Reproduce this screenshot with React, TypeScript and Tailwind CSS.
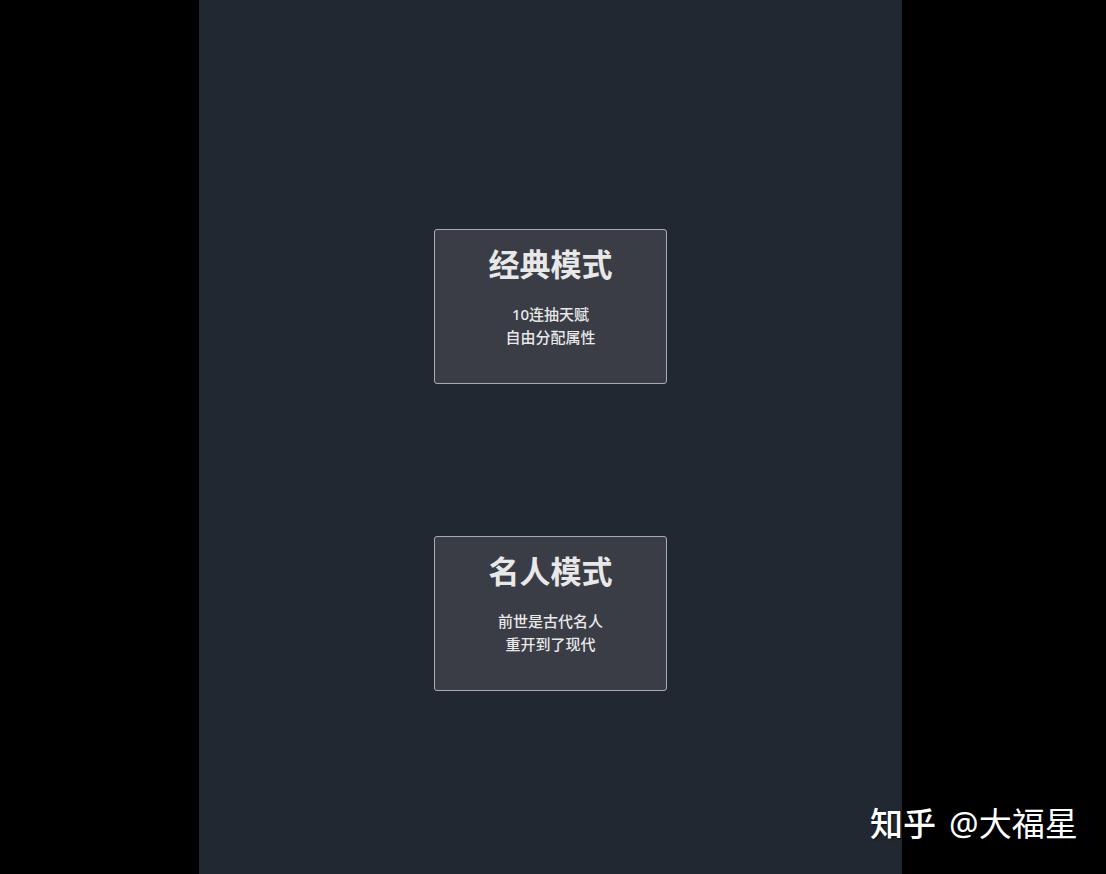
import React from "react";

const font = { fontFamily: '"Noto Sans", "Noto Sans CJK SC", sans-serif' };

function Card({ title, lines }: { title: string; lines: string[] }) {
  return (
    <div className="w-[233px] h-[155px] bg-[#3a3d46] border border-[#a9abb0] rounded-[3px] flex flex-col items-center pt-[13px]">
      <div className="text-[31px] leading-[42px] font-bold text-[#e8e8e8]">{title}</div>
      <div className="mt-[18px] text-[15px] leading-[23px] font-medium text-[#e8e8e8] text-center">
        {lines.map((l) => (
          <div key={l}>{l}</div>
        ))}
      </div>
    </div>
  );
}

export default function App() {
  return (
    <div className="w-[1106px] h-[874px] bg-black relative overflow-hidden" style={font}>
      <div className="ml-[199px] w-[703px] h-full bg-[#222831] flex flex-col items-center pt-[229px] gap-[152px]">
        <Card title="经典模式" lines={["10连抽天赋", "自由分配属性"]} />
        <Card title="名人模式" lines={["前世是古代名人", "重开到了现代"]} />
      </div>
      <div className="absolute left-[870px] top-[801px] flex items-center text-[33px] leading-[46px] text-white [text-shadow:1px_1px_2px_rgba(0,0,0,0.8)]">
        <span className="font-medium">知乎</span>
        <span className="ml-[13px]">@大福星</span>
      </div>
    </div>
  );
}
